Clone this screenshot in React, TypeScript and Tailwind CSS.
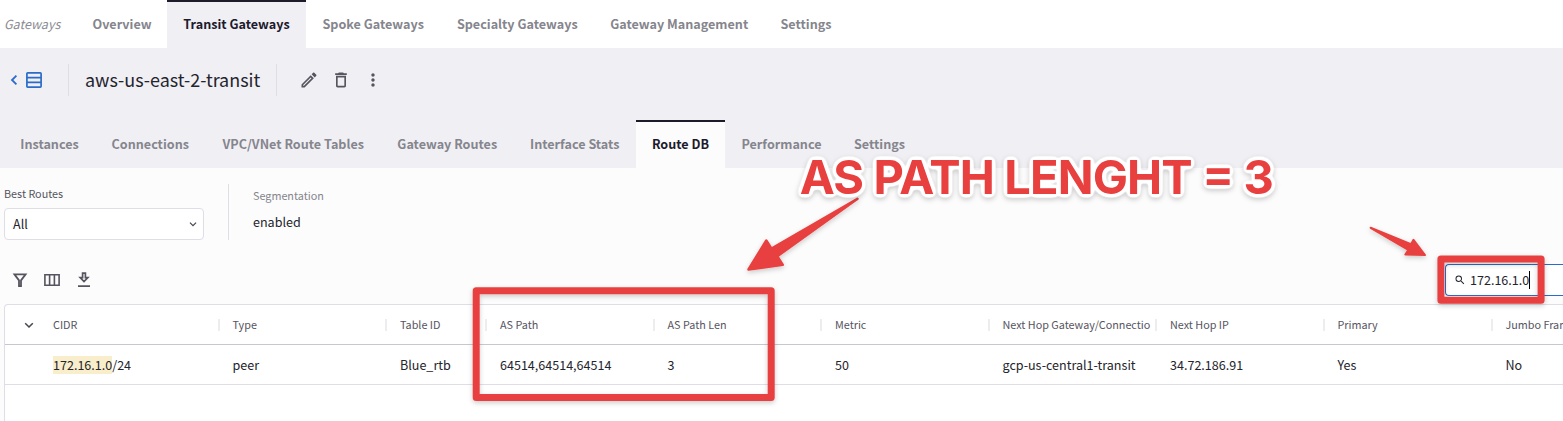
import type { ReactNode } from "react";
import { MdDeleteOutline, MdMoreVert, MdOutlineEdit, MdSearch } from "react-icons/md";

type Tab = { label: string; width: string; active?: boolean };

const mainTabs: Tab[] = [
  { label: "Overview", width: "w-[90px]" },
  { label: "Transit Gateways", width: "w-[139px]", active: true },
  { label: "Spoke Gateways", width: "w-[134.5px]" },
  { label: "Specialty Gateways", width: "w-[153.5px]" },
  { label: "Gateway Management", width: "w-[170.5px]" },
  { label: "Settings", width: "w-[83px]" },
];

const subTabs: Tab[] = [
  { label: "Instances", width: "w-[91px]" },
  { label: "Connections", width: "w-[110.5px]" },
  { label: "VPC/VNet Route Tables", width: "w-[175.5px]" },
  { label: "Gateway Routes", width: "w-[132.5px]" },
  { label: "Interface Stats", width: "w-[122.5px]" },
  { label: "Route DB", width: "w-[89px]", active: true },
  { label: "Performance", width: "w-[113px]" },
  { label: "Settings", width: "w-[83px]" },
];

type Column = { title: string; value: ReactNode; width: string };

const columns: Column[] = [
  {
    title: "CIDR",
    value: (
      <>
        <span className="inline-block h-[18px] bg-[#f8eecb] leading-[18px]">172.16.1.0</span>/24
      </>
    ),
    width: "w-[179.5px]",
  },
  { title: "Type", value: "peer", width: "w-[167.5px]" },
  { title: "Table ID", value: "Blue_rtb", width: "w-[100px]" },
  { title: "AS Path", value: "64514,64514,64514", width: "w-[167.5px]" },
  { title: "AS Path Len", value: "3", width: "w-[167.5px]" },
  { title: "Metric", value: "50", width: "w-[167.5px]" },
  { title: "Next Hop Gateway/Connectio", value: "gcp-us-central1-transit", width: "w-[167.5px]" },
  { title: "Next Hop IP", value: "34.72.186.91", width: "w-[167.5px]" },
  { title: "Primary", value: "Yes", width: "w-[168px]" },
  { title: "Jumbo Frame", value: "No", width: "w-[167.5px]" },
];

function TabItem({ tab, activeBg }: { tab: Tab; activeBg: string }) {
  return (
    <div
      className={`flex h-12 shrink-0 items-center justify-center border-t-2 pb-0.5 text-[12.6px] font-bold whitespace-nowrap ${tab.width} ${
        tab.active ? `border-t-[#1c1a2b] text-[#1c1a2b] ${activeBg}` : "border-t-transparent text-[#85858d]"
      }`}
    >
      {tab.label}
    </div>
  );
}

function Chevron({ size }: { size: number }) {
  return (
    <svg width={size} height={size} viewBox="0 0 10 10" fill="none" stroke="#45454d" strokeWidth="1.5">
      <path d="M1.2 3.2 5 7l3.8-3.8" />
    </svg>
  );
}

function Annotations() {
  return (
    <svg className="pointer-events-none absolute top-0 left-0" width="1563" height="421" viewBox="0 0 1563 421">
      <defs>
        <filter id="shadow" x="-20%" y="-20%" width="140%" height="150%">
          <feDropShadow dx="0" dy="2" stdDeviation="2.5" floodColor="#000" floodOpacity="0.2" />
        </filter>
        <filter id="halo" x="-5%" y="-30%" width="110%" height="170%" colorInterpolationFilters="sRGB">
          <feGaussianBlur in="SourceAlpha" stdDeviation="2.6" result="soft" />
          <feComponentTransfer in="soft" result="wide">
            <feFuncA type="linear" slope="14" intercept="-0.35" />
          </feComponentTransfer>
          <feFlood floodColor="#fff" />
          <feComposite in2="wide" operator="in" result="outline" />
          <feDropShadow in="outline" dx="0" dy="2" stdDeviation="2.5" floodColor="#000" floodOpacity="0.2" result="base" />
          <feMerge>
            <feMergeNode in="base" />
            <feMergeNode in="SourceGraphic" />
          </feMerge>
        </filter>
      </defs>
      <g filter="url(#shadow)" fill="none" stroke="#e8403f" strokeWidth="7" strokeLinejoin="round">
        <rect x="476.2" y="290.8" width="295" height="106.7" />
        <rect x="1440.9" y="258.9" width="100.2" height="41.3" />
      </g>
      <g filter="url(#shadow)" fill="#e8403f" stroke="#e8403f" strokeWidth="2.5" strokeLinejoin="round">
        <path d="M748.5 269.5 766.3 240.5 771.5 248.7 857.5 198.8 777.3 256.2 782.8 264.8Z" />
        <path strokeWidth="2" d="M1370.6 227.8 1411 244.3 1413.5 239.8 1425 255 1405.3 254.6 1408.3 250Z" />
      </g>
      <text
        x="799.8"
        y="194"
        textLength="474"
        lengthAdjust="spacing"
        filter="url(#halo)"
        fill="#e8403f"
        className="font-['Inter',sans-serif] text-[47px] font-bold"
      >
        AS PATH LENGHT = 3
      </text>
    </svg>
  );
}

export default function App() {
  return (
    <div className="relative flex h-[421px] w-[1563px] flex-col overflow-hidden bg-[#fcfcfc] font-['Noto_Sans_CJK_SC',sans-serif] text-[12.55px] leading-5 text-[#24242c]">
      <nav className="flex h-12 shrink-0 bg-white">
        <div className="flex w-[77px] items-center pl-1 text-[12.5px] text-[#8b8b92] italic">Gateways</div>
        {mainTabs.map((tab) => (
          <TabItem key={tab.label} tab={tab} activeBg="bg-[#f0eff4]" />
        ))}
      </nav>

      <header className="flex h-[120px] shrink-0 flex-col justify-between bg-[#f0eff4]">
        <div className="flex h-16 items-center">
          <div className="flex w-[68px] items-center gap-2 pl-2.5">
            <svg width="8" height="12" viewBox="0 0 8 12" fill="none" stroke="#2a6cc8" strokeWidth="1.8">
              <path d="M6.4 1.6 2 6l4.4 4.4" />
            </svg>
            <svg width="16" height="16" viewBox="0 0 16 16" fill="none" stroke="#2a6cc8" strokeWidth="1.7">
              <rect x="0.9" y="0.9" width="14.2" height="14.2" rx="0.8" />
              <path d="M1 5.6h14M1 10.4h14" />
            </svg>
          </div>
          <div className="flex h-8 w-[209px] items-center border-x border-[#dfdee6] pb-0.5 pl-4 text-[17.95px] whitespace-nowrap text-[#24242c]">
            aws-us-east-2-transit
          </div>
          <div className="flex items-center gap-3 pl-[22px] text-[#56555f]">
            <MdOutlineEdit size={20} />
            <MdDeleteOutline size={20} />
            <MdMoreVert size={20} />
          </div>
        </div>
        <div className="flex pl-1">
          {subTabs.map((tab) => (
            <TabItem key={tab.label} tab={tab} activeBg="bg-[#fcfcfc]" />
          ))}
        </div>
      </header>

      <section className="flex h-[88px] shrink-0 pt-4 pl-1">
        <div className="w-[224px]">
          <div className="h-6 text-[10.8px] leading-[18px] text-[#56555f]">Best Routes</div>
          <div className="flex h-8 w-[200px] items-center justify-between rounded border border-[#dfdee6] bg-white pr-1.5 pl-2">
            <span>All</span>
            <Chevron size={8} />
          </div>
        </div>
        <div className="h-14 border-l border-[#dfdee6] pl-6">
          <div className="h-[22px] pt-0.5 text-[10.8px] leading-[18px] text-[#85858d]">Segmentation</div>
          <div className="pt-1.5">enabled</div>
        </div>
      </section>

      <section className="flex h-12 shrink-0 items-center justify-between pl-3">
        <div className="flex items-center gap-4 text-[#56555f]">
          <svg width="16" height="16" viewBox="0 0 16 16" fill="none" stroke="currentColor" strokeWidth="1.8">
            <path d="M2.4 2.3h11.2L9 8.4V14.2H7V8.4Z" />
          </svg>
          <svg width="16" height="16" viewBox="0 0 16 16" fill="none" stroke="currentColor" strokeWidth="1.6">
            <path d="M.9 2.7h14.2v10.6H.9ZM5.6 2.7v10.6M10.4 2.7v10.6" />
          </svg>
          <svg width="16" height="16" viewBox="0 0 16 16" fill="none" stroke="currentColor" strokeWidth="1.7">
            <path d="M6.6 1.2h2.8v4.5h2.4L8 9.6 4.2 5.7h2.4ZM2 14.2h12" />
          </svg>
        </div>
        <div className="flex h-8 w-[118px] items-center rounded-l border border-r-0 border-[#2a6cc8] bg-white pl-2">
          <MdSearch size={12} className="mr-1" />
          <span>172.16.1.0</span>
          <span className="h-[18px] w-px bg-black" />
        </div>
      </section>

      <section className="ml-1 flex h-[117px] w-[1559px] shrink-0 flex-col overflow-hidden rounded-tl border-t border-l border-[#dfdee6] bg-white">
        <div className="flex h-10 shrink-0 items-center border-b border-[#c8c7d0] text-[10.8px] text-[#56555f]">
          <div className="flex w-12 shrink-0 pl-[19px]">
            <Chevron size={10} />
          </div>
          {columns.map((c) => (
            <div key={c.title} className={`flex shrink-0 items-center whitespace-nowrap ${c.width}`}>
              <span className="pb-0.5">{c.title}</span>
              <span className="mr-[13px] ml-auto h-3 w-0.5 shrink-0 bg-[#ededf0]" />
            </div>
          ))}
        </div>
        <div className="flex h-10 shrink-0 items-center border-b border-[#dfdee6] pl-12">
          {columns.map((c) => (
            <div key={c.title} className={`shrink-0 whitespace-nowrap ${c.width}`}>
              {c.value}
            </div>
          ))}
        </div>
      </section>

      <Annotations />
    </div>
  );
}
